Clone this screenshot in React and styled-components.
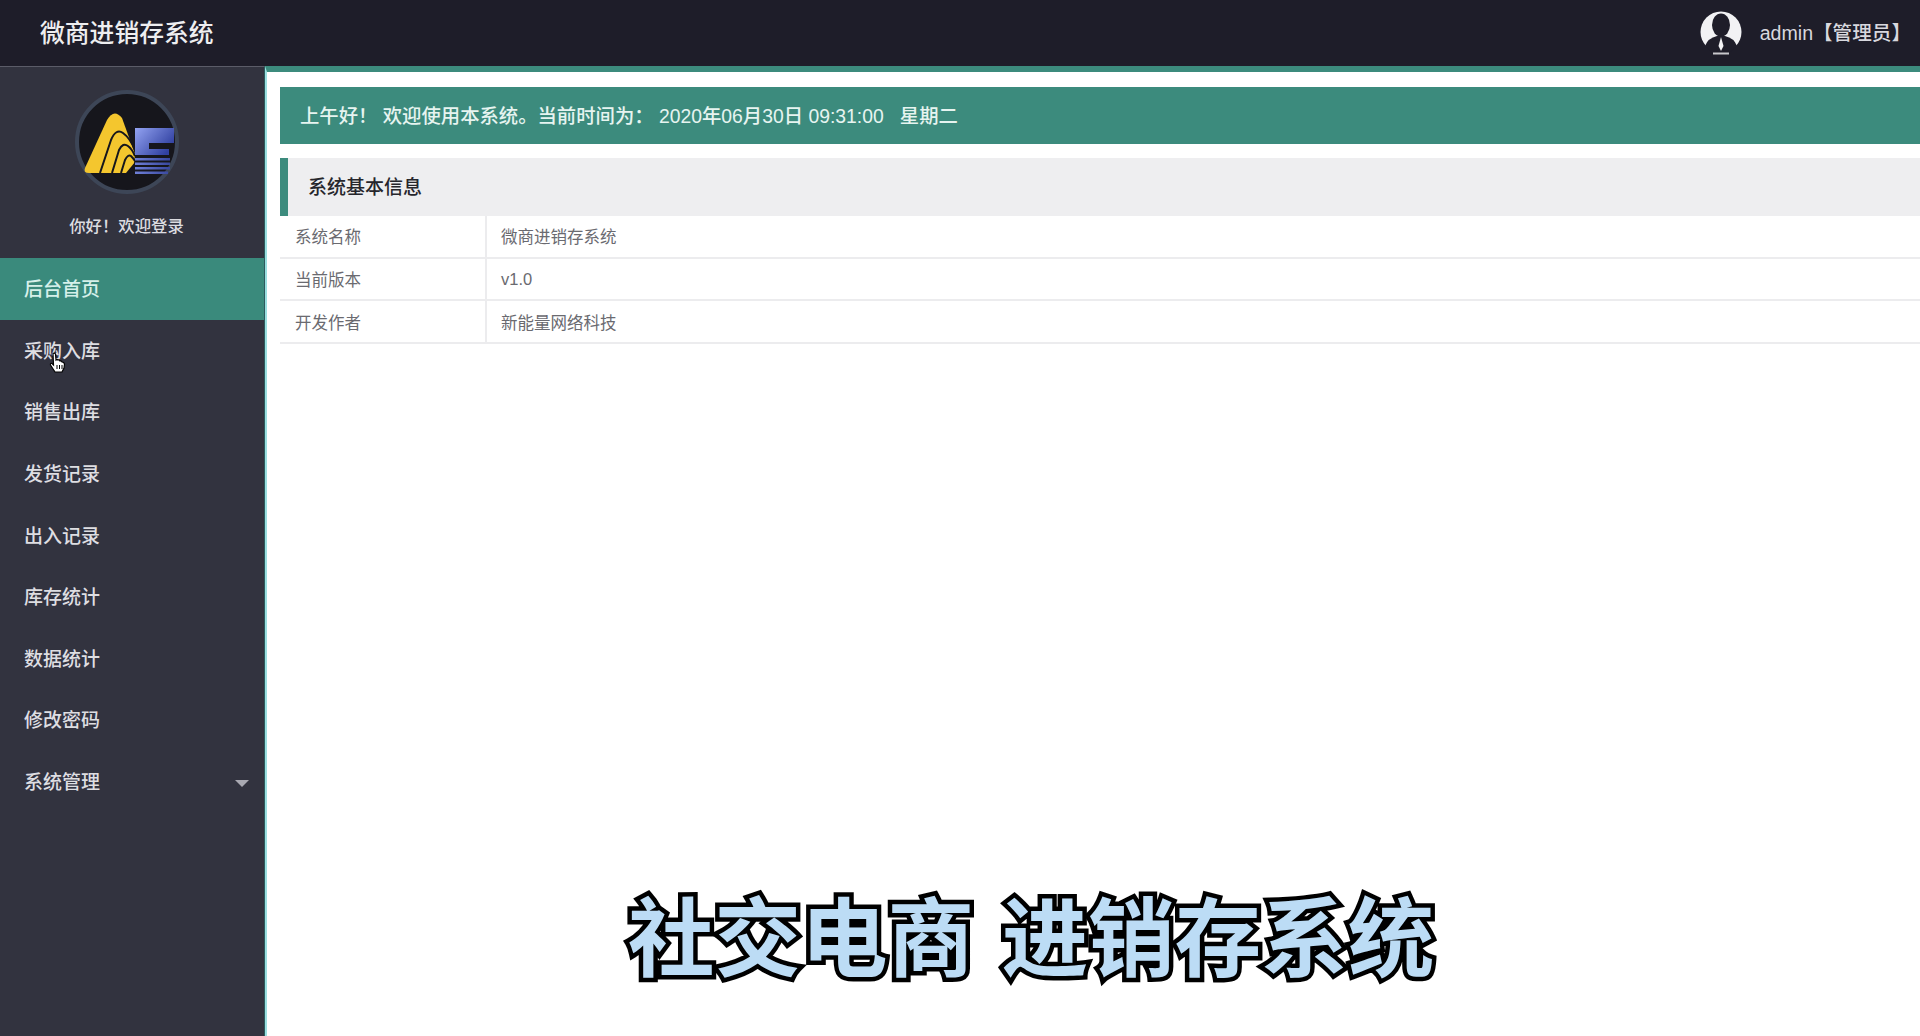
import React from 'react';
import styled, { createGlobalStyle } from 'styled-components';

const GlobalStyle = createGlobalStyle`
  html, body, #root {
    margin: 0;
    padding: 0;
    height: 100%;
  }
  body {
    overflow: hidden;
    background: #ffffff;
    font-family: "Liberation Sans", "Noto Sans CJK SC", sans-serif;
  }
`;

const Page = styled.div`
  position: relative;
  display: flex;
  flex-direction: column;
  width: 1920px;
  height: 1036px;
  overflow: hidden;
`;

const Header = styled.header`
  display: flex;
  align-items: center;
  justify-content: space-between;
  flex: 0 0 66px;
  padding: 0 9px 0 40px;
  background: #1e1d29;
`;

const Brand = styled.div`
  padding-bottom: 4px;
  font-size: 24.8px;
  font-weight: 500;
  color: #eeeef0;
`;

const UserBox = styled.div`
  display: flex;
  align-items: center;
  gap: 17px;
  font-size: 19.6px;
  color: #d8d8de;
`;

const UserName = styled.span`
  padding-bottom: 4px;
  font-weight: 500;
`;

const Body = styled.div`
  display: flex;
  flex: 1;
  min-height: 0;
`;

const Sidebar = styled.aside`
  flex: 0 0 265px;
  background: #32333f;
  border-top: 1px solid #5b5c68;
  border-right: 1px solid #2c5a5c;
  box-sizing: border-box;
`;

const Profile = styled.div`
  display: flex;
  flex-direction: column;
  align-items: center;
  height: 191px;
  padding-top: 21px;
  padding-right: 11px;
  box-sizing: border-box;
`;

const Welcome = styled.div`
  margin-top: 19px;
  font-size: 16.4px;
  font-weight: 500;
  line-height: 22px;
  color: #dcdce0;
`;

const MenuItem = styled.div`
  position: relative;
  display: flex;
  align-items: center;
  justify-content: space-between;
  height: 61.6px;
  padding: 0 15px 2px 24px;
  box-sizing: border-box;
  font-size: 19px;
  font-weight: 500;
  color: ${props => (props.$active ? '#d6f0ea' : '#dedee2')};
  background: ${props => (props.$active ? '#3a8a7c' : 'transparent')};
`;

const Caret = styled.span`
  width: 0;
  height: 0;
  margin-top: 5px;
  border-left: 7px solid transparent;
  border-right: 7px solid transparent;
  border-top: 7px solid #a9a9b2;
`;

const Pointer = styled.svg`
  position: absolute;
  left: 49px;
  top: 32px;
`;

const Main = styled.main`
  flex: 1;
  min-width: 0;
  padding: 15px 0 0 13px;
  background: #ffffff;
  border-top: 6px solid #3c8b7d;
  border-left: 2px solid #9adfe0;
`;

const Notice = styled.div`
  display: flex;
  align-items: center;
  height: 57px;
  padding: 0 0 2px 20px;
  box-sizing: border-box;
  font-size: 19.35px;
  font-weight: 500;
  color: #e6f4f0;
  background: #3c8b7d;
  white-space: pre;
`;

const Section = styled.section`
  margin-top: 14px;
`;

const SectionTitle = styled.h2`
  display: flex;
  align-items: center;
  height: 58px;
  margin: 0;
  padding: 0 0 3px 20px;
  box-sizing: border-box;
  font-size: 19px;
  font-weight: 500;
  color: #26262c;
  background: #eeeef0;
  border-left: 8px solid #3c8b7d;
`;

const InfoRow = styled.div`
  display: grid;
  grid-template-columns: 207px 1fr;
  height: 42.7px;
  box-sizing: border-box;
  font-size: 16.5px;
  color: #6a6a70;
  border-bottom: 2px solid #ececee;
`;

const InfoLabel = styled.div`
  display: flex;
  align-items: center;
  padding-left: 15px;
  border-right: 2px solid #ececee;
`;

const InfoValue = styled.div`
  display: flex;
  align-items: center;
  padding-left: 14px;
`;

const Subtitle = styled.div`
  position: absolute;
  left: 628px;
  top: 874px;
  font-family: "Noto Sans CJK SC", sans-serif;
  font-size: 86.5px;
  font-weight: 700;
  line-height: 118px;
  word-spacing: 8px;
  white-space: pre;
  color: #bcdcf5;
  -webkit-text-stroke: 9px #000000;
  paint-order: stroke fill;
`;

const menu = ['后台首页', '采购入库', '销售出库', '发货记录', '出入记录', '库存统计', '数据统计', '修改密码', '系统管理'];

const info = [
  ['系统名称', '微商进销存系统'],
  ['当前版本', 'v1.0'],
  ['开发作者', '新能量网络科技'],
];

function Logo() {
  return (
    <svg width="108" height="108" viewBox="0 0 108 108">
      <defs>
        <linearGradient id="eBlue" x1="0" y1="0" x2="1" y2="0.6">
          <stop offset="0" stopColor="#93a3f2" />
          <stop offset="1" stopColor="#3040a0" />
        </linearGradient>
        <linearGradient id="stripeBlue" x1="0" y1="0" x2="1" y2="0">
          <stop offset="0" stopColor="#6f80d8" />
          <stop offset="1" stopColor="#38479f" />
        </linearGradient>
      </defs>
      <circle cx="54" cy="54" r="50" fill="#16161c" stroke="#3d4657" strokeWidth="4" />
      <path d="M12 80 L34 32 Q41 20 49 30 L62 66 L60 85 H16 Q10 85 12 80 Z" fill="#f4c62e" />
      <path d="M27 85 L38 52 Q43 40 50 45 Q57 50 62 62" fill="none" stroke="#16161c" strokeWidth="2" />
      <path d="M39 85 L46 62 Q50 54 55 58 Q59 61 62 68" fill="none" stroke="#16161c" strokeWidth="2" />
      <path d="M48 85 L52 72 Q55 66 58 68 Q60 70 62 73" fill="none" stroke="#16161c" strokeWidth="2" />
      <path d="M53 85 L62 74 V87 Z" fill="#16161c" />
      <path d="M62 40 H101 V55 H76 V61 H96 V67 H62 Z" fill="url(#eBlue)" />
      <path d="M62 70 H97 V72.5 H62 Z M62 74.5 H97 V77 H62 Z M62 79 H97 V81.5 H62 Z M62 83.5 H95 V86 H62 Z" fill="url(#stripeBlue)" />
    </svg>
  );
}

function Avatar() {
  return (
    <svg width="44" height="46" viewBox="0 0 44 46">
      <circle cx="22" cy="22" r="20.5" fill="#f2f2f4" />
      <path d="M2 37 H42 V46 H2 Z" fill="#1e1d29" />
      <ellipse cx="22" cy="15" rx="9" ry="11.5" fill="#1e1d29" />
      <path d="M6 36 Q9 28 18 26 H26 Q35 28 38 36 L31 42 H13 Z" fill="#1e1d29" />
      <path d="M22 27 L24.5 36 L22 41 L19.5 36 Z" fill="#f2f2f4" />
      <path d="M14 43.5 H30" stroke="#c8c8cc" strokeWidth="2" />
    </svg>
  );
}

function Hand() {
  return (
    <Pointer width="17" height="21" viewBox="0 0 17 21">
      <path
        d="M4 1.5 Q5.5 0.5 6.5 2 L7 8 Q8 7 9 8 Q10.5 7.5 11 9 Q12.5 8.5 13 10 Q15 10 15.5 12 L15 16 L13 20 H6 L1.5 13 Q1 11 3 11.5 L4.5 13 Z"
        fill="#ffffff"
        stroke="#000000"
        strokeWidth="1.2"
      />
      <path d="M8 13 V17 M10.5 13 V17 M13 13 V17" stroke="#000000" strokeWidth="1" />
    </Pointer>
  );
}

export default function App() {
  return (
    <Page>
      <GlobalStyle />
      <Header>
        <Brand>微商进销存系统</Brand>
        <UserBox>
          <Avatar />
          <UserName>admin【管理员】</UserName>
        </UserBox>
      </Header>
      <Body>
        <Sidebar>
          <Profile>
            <Logo />
            <Welcome>你好！欢迎登录</Welcome>
          </Profile>
          {menu.map((name, i) => (
            <MenuItem key={name} $active={i === 0}>
              {name}
              {i === 1 && <Hand />}
              {i === menu.length - 1 && <Caret />}
            </MenuItem>
          ))}
        </Sidebar>
        <Main>
          <Notice>上午好！ 欢迎使用本系统。当前时间为： 2020年06月30日 09:31:00   星期二</Notice>
          <Section>
            <SectionTitle>系统基本信息</SectionTitle>
            {info.map(([label, value]) => (
              <InfoRow key={label}>
                <InfoLabel>{label}</InfoLabel>
                <InfoValue>{value}</InfoValue>
              </InfoRow>
            ))}
          </Section>
        </Main>
      </Body>
      <Subtitle>社交电商 进销存系统</Subtitle>
    </Page>
  );
}
